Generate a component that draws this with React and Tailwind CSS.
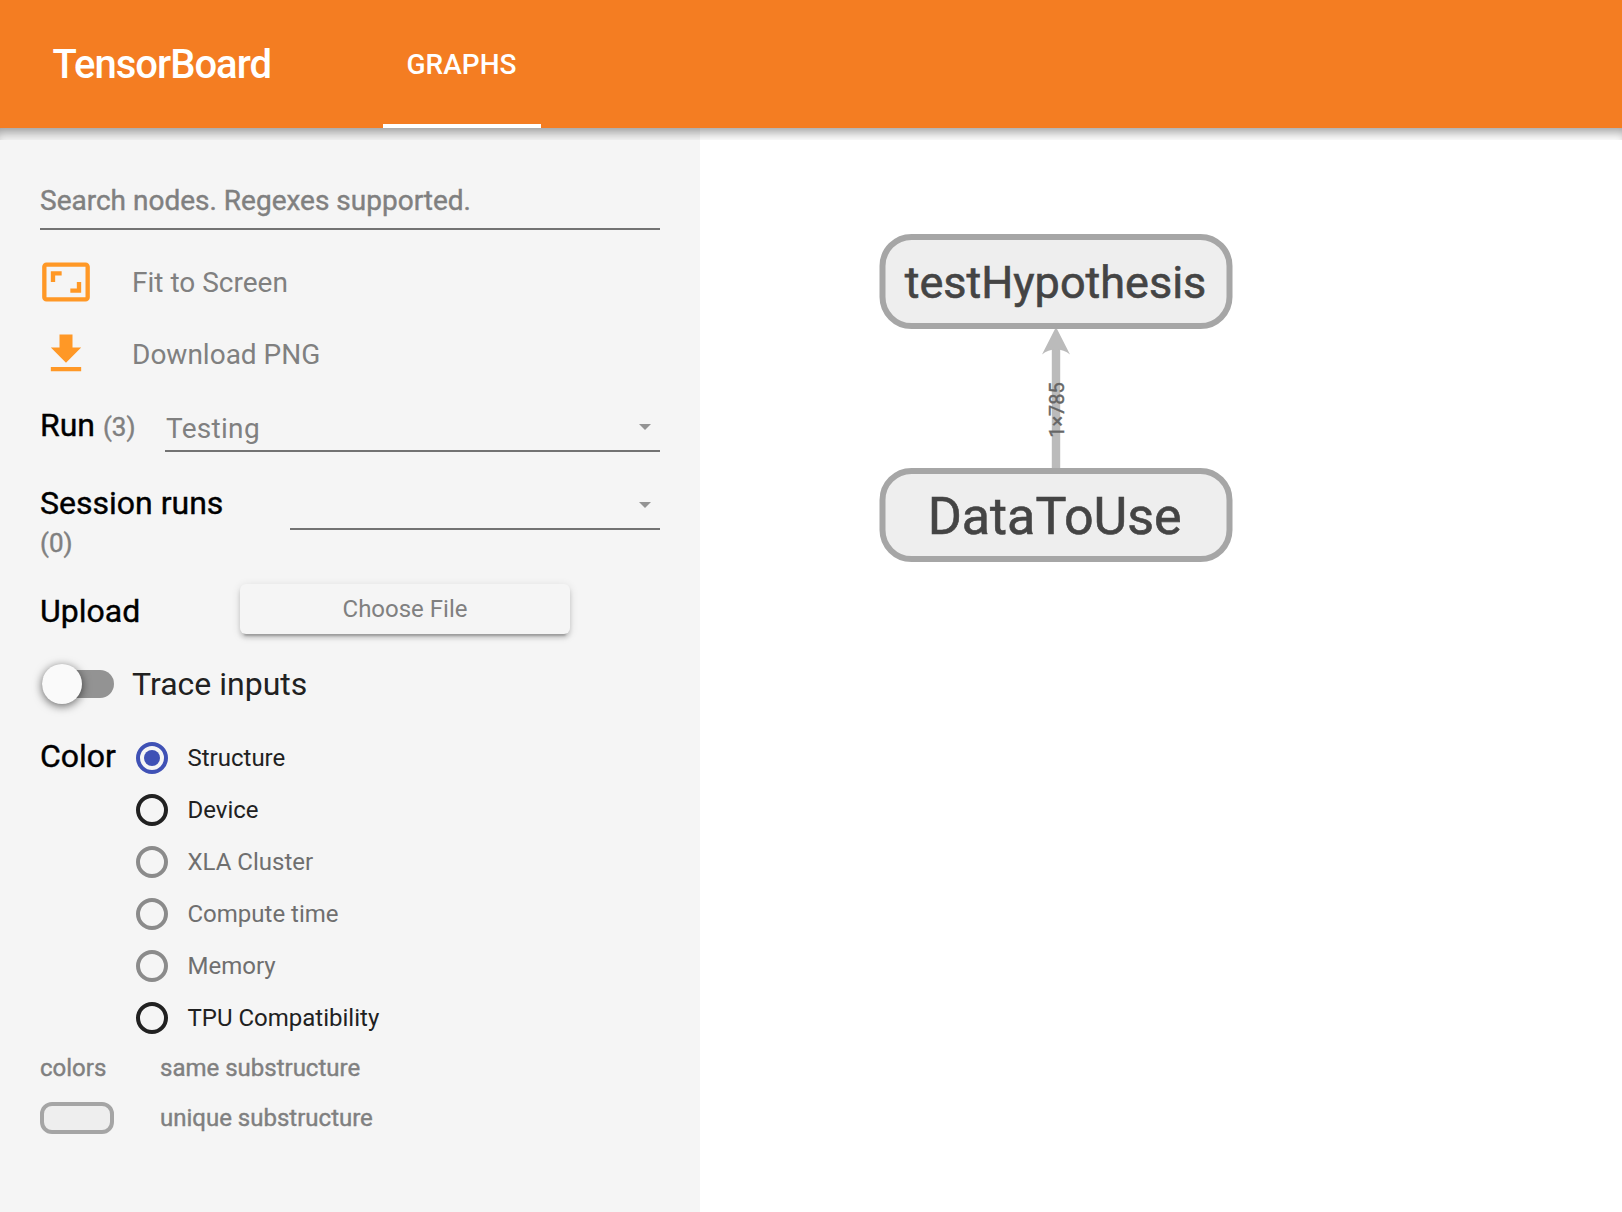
import React from "react";

const colorOptions = [
  { label: "Structure", state: "checked" },
  { label: "Device", state: "enabled" },
  { label: "XLA Cluster", state: "disabled" },
  { label: "Compute time", state: "disabled" },
  { label: "Memory", state: "disabled" },
  { label: "TPU Compatibility", state: "enabled" },
];

const ringClass = {
  checked: "border-[#3f51b5]",
  enabled: "border-[#212121]",
  disabled: "border-[#8b8b8b]",
};

function Header() {
  return (
    <header className="flex h-32 shrink-0 bg-[#f47d22] text-white font-medium">
      <div className="flex w-[383px] items-center pt-0.5 pl-[52.5px] text-[40px] tracking-[-1px]">TensorBoard</div>
      <div className="flex w-[158px] items-center justify-center border-b-4 border-white pt-1.5 pr-px text-[28px]">
        GRAPHS
      </div>
    </header>
  );
}

function Action({ icon, label }) {
  return (
    <div className="flex h-[72px] items-center gap-10 text-[28px] text-[#808080]">
      <svg viewBox="0 0 24 24" className="size-13 fill-[#ff9826]">
        <path d={icon} />
      </svg>
      <span className="pt-0.5">{label}</span>
    </div>
  );
}

function Select({ value }) {
  return (
    <div className="flex h-[50px] flex-1 items-center justify-between border-b-2 border-[#737373] pt-0.5 pr-[9px] text-[28px] text-[#808080]">
      <span className="pt-1 pl-px tracking-[0.3px]">{value}</span>
      <svg viewBox="0 0 12 6" className="h-1.5 w-3 fill-[#949494]">
        <path d="M0 0h12L6 6z" />
      </svg>
    </div>
  );
}

function Radio({ label, state }) {
  return (
    <div className="flex h-[52px] items-center gap-[19.5px] text-2xl">
      <span className={`flex size-8 items-center justify-center rounded-full border-4 ${ringClass[state]}`}>
        {state === "checked" && <span className="size-4 rounded-full bg-[#3f51b5]" />}
      </span>
      <span className={state === "disabled" ? "text-[#6f6f6f]" : "text-[#212121]"}>{label}</span>
    </div>
  );
}

function Sidebar() {
  return (
    <aside className="flex w-[700px] shrink-0 flex-col bg-[#f5f5f5] px-10 pt-11 text-black">
      <div className="flex h-[58px] items-center border-b-2 border-[#737373] pt-0.5 text-[28px] text-[#808080] [-webkit-text-stroke:0.4px]">
        Search nodes. Regexes supported.
      </div>
      <div className="mt-4">
        <Action
          label="Fit to Screen"
          icon="M19 12h-2v3h-3v2h5v-5zM7 9h3V7H5v5h2V9zm14-6H3c-1.1 0-2 .9-2 2v14c0 1.1.9 2 2 2h18c1.1 0 2-.9 2-2V5c0-1.1-.9-2-2-2zm0 16.01H3V4.99h18v14.02z"
        />
        <Action label="Download PNG" icon="M19 9h-4V3H9v6H5l7 7 7-7zM5 18v2h14v-2H5z" />
      </div>
      <div className="mt-2 flex h-[54px] items-end">
        <div className="w-[125px] text-[32px] leading-[50px] [-webkit-text-stroke:0.4px]">
          Run <span className="text-[26px] text-[#808080]">(3)</span>
        </div>
        <Select value="Testing" />
      </div>
      <div className="mt-7 flex h-[82px] items-start">
        <div className="w-[250px] pt-[3px] text-[32px] leading-10 [-webkit-text-stroke:0.4px]">
          <div>Session runs</div>
          <div className="text-[26px] text-[#808080]">(0)</div>
        </div>
        <Select value="" />
      </div>
      <div className="mt-[22px] flex h-[50px] items-center">
        <div className="w-[200px] pt-[3px] text-[32px] [-webkit-text-stroke:0.4px]">Upload</div>
        <button className="h-[50px] w-[330px] rounded-md bg-[#f5f5f5] text-2xl text-[#808080] shadow-[0_4px_4px_rgba(0,0,0,0.14),0_2px_10px_rgba(0,0,0,0.12),0_6px_2px_-4px_rgba(0,0,0,0.2)]">
          Choose File
        </button>
      </div>
      <div className="mt-[30px] flex h-10 items-center">
        <div className="ml-0.5 flex h-7 w-[72px] items-center rounded-full bg-[#939393]">
          <span className="size-10 rounded-full bg-[#fafafa] shadow-[0_2px_10px_rgba(0,0,0,0.6)]" />
        </div>
        <span className="ml-[18px] text-[32px] text-[#212121]">Trace inputs</span>
      </div>
      <div className="mt-7 flex">
        <div className="w-24 text-[32px] leading-[49px] [-webkit-text-stroke:0.4px]">Color</div>
        <div>
          {colorOptions.map((option) => (
            <Radio key={option.label} {...option} />
          ))}
        </div>
      </div>
      <div className="flex h-[47px] items-center text-2xl text-[#808080] [-webkit-text-stroke:0.4px]">
        <span className="w-[120px]">colors</span>
        <span>same substructure</span>
      </div>
      <div className="flex h-[54px] items-center text-2xl text-[#808080] [-webkit-text-stroke:0.4px]">
        <div className="w-[120px]">
          <div className="h-8 w-[74px] rounded-xl border-4 border-[#a5a5a5] bg-[#eee]" />
        </div>
        <span>unique substructure</span>
      </div>
    </aside>
  );
}

function Graph() {
  return (
    <svg width="922" height="1084" viewBox="700 128 922 1084" className="block bg-white font-['Roboto',sans-serif]">
      <path d="M1056 349V470" stroke="#bbb" strokeWidth="8.4" />
      <path d="M1056 327L1070 354.5Q1064 349.5 1056 349.5Q1048 349.5 1042 354.5Z" fill="#bbb" />
      <text transform="translate(1064 410) rotate(-90)" textAnchor="middle" fontSize="20" fill="#666" stroke="#666" strokeWidth="0.4">
        1×785
      </text>
      <g fill="#eee" stroke="#a6a6a6" strokeWidth="6">
        <rect x="882.5" y="237" width="347" height="89" rx="29" />
        <rect x="882.5" y="471" width="347" height="88" rx="29" />
      </g>
      <g fill="#444" stroke="#444" strokeWidth="0.6" textAnchor="middle">
        <text x="1055.5" y="298" fontSize="45">testHypothesis</text>
        <text x="1054.7" y="533.7" fontSize="52">DataToUse</text>
      </g>
    </svg>
  );
}

export default function App() {
  return (
    <div className="flex h-[1212px] w-[1622px] flex-col overflow-hidden bg-white font-['Roboto',sans-serif]">
      <Header />
      <div className="relative flex flex-1">
        <Sidebar />
        <Graph />
        <div className="pointer-events-none absolute inset-x-0 top-0 h-3 shadow-[inset_0_10px_12px_-6px_rgba(0,0,0,0.4)]" />
      </div>
    </div>
  );
}
